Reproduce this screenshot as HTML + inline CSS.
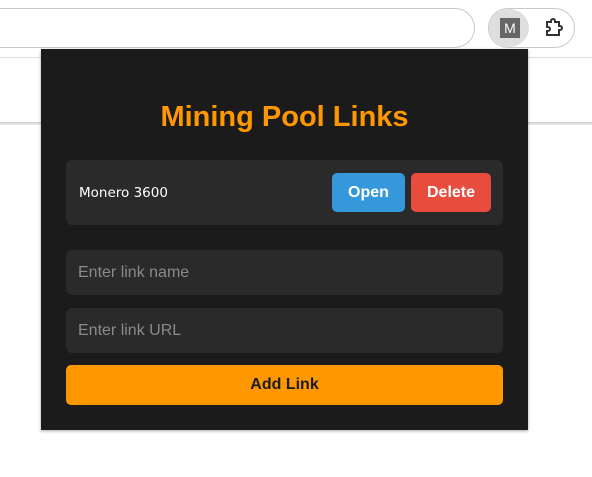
<!DOCTYPE html>
<html><head><style>
body{margin:0;width:592px;height:477px;background:#fff;position:relative;overflow:hidden;font-family:"Liberation Sans",sans-serif}
.addr{position:absolute;left:-20px;top:8px;width:495px;height:40px;border:1px solid #c8c8c8;border-radius:21px;box-sizing:border-box}
.ext{position:absolute;left:488px;top:8px;width:87px;height:40px;border:1px solid #c8c8c8;border-radius:21px;box-sizing:border-box}
.circ{position:absolute;left:489px;top:9px;width:40px;height:38px;border-radius:50%;background:#dedede}
.m{position:absolute;left:500px;top:18px;width:20px;height:20px;background:#666;color:#fff;font-size:14px;text-align:center;line-height:20px}
.tb{position:absolute;left:0;top:57px;width:592px;height:1px;background:#ddd}
.sh{position:absolute;left:0;top:122px;width:592px;height:3px;background:linear-gradient(#ccc,#eee)}
.pop{position:absolute;left:41px;top:49px;width:487px;height:381px;background:#1b1b1b;box-shadow:0 1px 3px rgba(0,0,0,.35)}
h1{position:absolute;left:0;width:100%;top:51px;margin:0;text-align:center;color:#ff9800;font-size:29px;font-family:"Liberation Sans",sans-serif;font-weight:bold;line-height:34px}
.item{position:absolute;left:25px;top:111px;width:437px;height:65px;background:#2a2a2a;border-radius:6px}
.item span{position:absolute;left:13px;top:25px;color:#fff;font-size:13.5px;font-family:"DejaVu Sans",sans-serif}
.btn{position:absolute;top:13px;height:39px;border-radius:5px;color:#fff;font-weight:bold;font-size:16px;text-align:center;line-height:39px}
.in{position:absolute;left:25px;width:437px;height:45px;background:#2a2a2a;border-radius:6px;color:#8a8a8a;font-size:16px;line-height:45px;padding-left:12px;box-sizing:border-box}
.add{position:absolute;left:25px;top:316px;width:437px;height:40px;background:#ff9800;border-radius:5px;text-align:center;line-height:40px;font-weight:bold;font-size:16px;color:#1b1b1b}
</style></head><body>
<div class="addr"></div><div class="ext"></div><div class="circ"></div><div class="m">M</div>
<svg style="position:absolute;left:543px;top:17px" width="22" height="22" viewBox="0 0 22 22"><path d="M4 5h4v-1a2 2 0 0 1 4 0v1h4v4h1a2 2 0 0 1 0 4h-1v5h-12v-4h1a2 2 0 0 0 0-4h-1z" fill="none" stroke="#333" stroke-width="2"/></svg>
<div class="tb"></div><div class="sh"></div>
<div class="pop">
<h1>Mining Pool Links</h1>
<div class="item"><span>Monero 3600</span>
<div class="btn" style="left:266px;width:73px;background:#3498db">Open</div>
<div class="btn" style="left:345px;width:80px;background:#e74c3c">Delete</div></div>
<div class="in" style="top:201px">Enter link name</div>
<div class="in" style="top:259px">Enter link URL</div>
<div class="add">Add Link</div>
</div>
</body></html>
